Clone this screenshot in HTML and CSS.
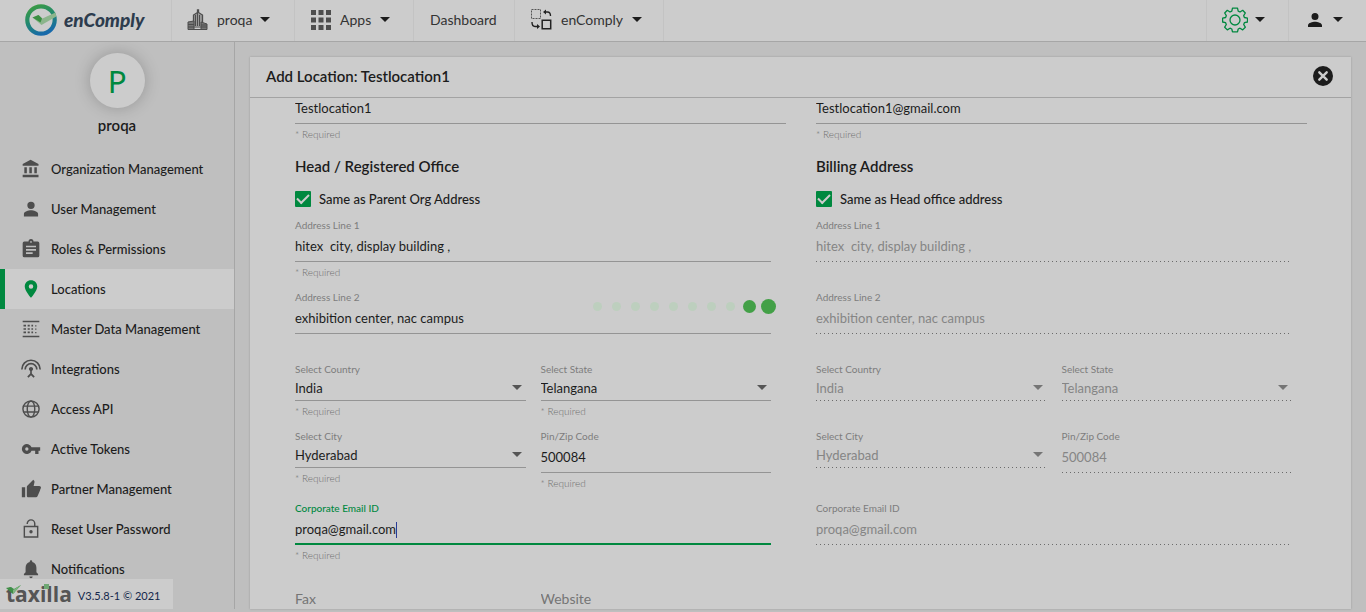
FILE: index.html
```html
<!DOCTYPE html>
<html lang="en">
<head>
<meta charset="utf-8">
<title>enComply - Add Location</title>
<link rel="stylesheet" href="styles.css">
</head>
<body>
<div class="app">
  <header class="topbar">
    <a class="brand" href="#">
      <svg width="34" height="34" viewBox="0 0 34 34" aria-hidden="true">
        <defs><linearGradient id="ring" x1="0.2" y1="0" x2="0.6" y2="1"><stop offset="0" stop-color="#3a9a45"/><stop offset="0.45" stop-color="#238a6c"/><stop offset="1" stop-color="#1769ab"/></linearGradient></defs>
        <circle cx="17" cy="17" r="13.700" fill="#ccc" stroke="url(#ring)" stroke-width="4.200"/>
        <path d="M8.500 14.500l6-2.500 4 3.500 13-6 .8 4L17.500 22z" fill="#8cb58c"/>
        <path d="M8.500 14.500l6-2.500 3.500 3.500-1.500 4z" fill="#3b8f42"/>
      </svg>
      <span class="brand-name">enComply</span>
    </a>
    <nav class="topnav">
      <button class="nav-item org" type="button">
        <svg width="22" height="22" viewBox="0 0 22 22" aria-hidden="true"><path d="M6.500 17V6l4-2.500V1h1v2.500L15.500 6v11" fill="#999" stroke="#4d4d4d" stroke-width="1.300"/><path d="M8.500 6v11M10.500 4v13M12.500 6v11" stroke="#4d4d4d" stroke-width="1"/><path d="M1 13l6-1v8.500H1zM14 13l6 2v5.500h-6z" fill="#777" stroke="#4d4d4d"/><path d="M1 15.500h6M1 18h19M14 16h6M7 20.500h7" stroke="#4d4d4d"/></svg>
        <span>proqa</span><i class="caret-down"></i>
      </button>
      <button class="nav-item apps" type="button">
        <svg width="20" height="20" viewBox="0 0 20 20" fill="#4d4d4d" aria-hidden="true"><path d="M0 0h5v5H0zM7.500 0h5v5h-5zM15 0h5v5h-5zM0 7.500h5v5H0zM7.500 7.500h5v5h-5zM15 7.500h5v5h-5zM0 15h5v5H0zM7.500 15h5v5h-5zM15 15h5v5h-5z"/></svg>
        <span>Apps</span><i class="caret-down"></i>
      </button>
      <a class="nav-item dash" href="#">Dashboard</a>
      <button class="nav-item product" type="button">
        <svg width="21" height="21" viewBox="0 0 21 21" fill="none" stroke="#222" aria-hidden="true"><path d="M.5.5h9v9h-9z" stroke="#555" stroke-dasharray="2 1"/><path d="M11.200 11.200h8.500v8.500h-8.500z" stroke-width="1.500"/><path d="M14 3h2.500q3 0 3 4M1 13q0 4.500 3 4.500h3" stroke-width="1.400"/><path d="M15 .5L12 3l3 2.500zM6 15l3 2.500L6 20z" fill="#222" stroke="none"/></svg>
        <span>enComply</span><i class="caret-down"></i>
      </button>
    </nav>
    <button class="nav-item gear" type="button" aria-label="Settings">
      <svg width="26" height="26" viewBox="0 0 26 26" fill="none" stroke="#00883f" stroke-width="1.300" stroke-linejoin="round" aria-hidden="true"><circle cx="13" cy="13" r="5"/><path d="M10.500 1.200h5l.7 3 1.800.8 2.700-1.700 2.600 2.700-1.600 2.700.7 1.800 3.100.7v3.800l-3.100.7-.7 1.800 1.600 2.700-2.600 2.700-2.700-1.700-1.800.8-.7 2.800h-5l-.7-2.800-1.800-.8-2.700 1.700L2.700 20.200l1.600-2.700-.7-1.800-3-.7v-3.800l3-.7.7-1.800L2.700 6l2.600-2.700L8 5l1.800-.8z"/></svg>
      <i class="caret-down"></i>
    </button>
    <button class="nav-item account" type="button" aria-label="Account">
      <svg width="14" height="14" viewBox="4 4 16 16" fill="#1c1c1c" aria-hidden="true"><path d="M12 12a4 4 0 1 0 0-8 4 4 0 0 0 0 8zm0 2c-2.670 0-8 1.340-8 4v2h16v-2c0-2.660-5.330-4-8-4z"/></svg>
      <i class="caret-down"></i>
    </button>
  </header>

  <div class="main">
    <aside class="sidebar">
      <div class="avatar">P</div>
      <div class="org-name">proqa</div>
      <nav class="menu">
        <a href="#"><svg viewBox="0 0 24 24"><path d="M4 10v7h3v-7H4zm6 0v7h3v-7h-3zM2 22h19v-3H2v3zm14-12v7h3v-7h-3zM11.500 1L2 6v2h19V6l-9.500-5z"/></svg>Organization Management</a>
        <a href="#"><svg viewBox="0 0 24 24"><path d="M12 12a4.400 4.400 0 1 0 0-8.800 4.400 4.400 0 0 0 0 8.800zm0 1.500c-3 0-8.500 1.500-8.500 4.500v3h17v-3c0-3-5.500-4.500-8.500-4.500z"/></svg>User Management</a>
        <a href="#"><svg viewBox="0 0 24 24"><path d="M20 3h-5a3 3 0 0 0-6 0H4a2 2 0 0 0-2 2v15a2 2 0 0 0 2 2h16a2 2 0 0 0 2-2V5a2 2 0 0 0-2-2zm-8-.5a1 1 0 1 1 0 2 1 1 0 0 1 0-2zM14 18H6v-2h8zm4-4H6v-2h12zm0-4H6V8h12z"/></svg>Roles &amp; Permissions</a>
        <a href="#" class="active" aria-current="page"><svg viewBox="0 0 24 24"><path d="M12 1.500c-4.300 0-7.500 3.200-7.500 7.500 0 5.500 7.500 13.500 7.500 13.500S19.500 14.500 19.500 9c0-4.300-3.200-7.500-7.500-7.500zm0 10.200A2.700 2.700 0 1 1 12 6.300a2.700 2.700 0 0 1 0 5.400z"/></svg>Locations</a>
        <a href="#"><svg viewBox="0 0 24 24"><path d="M2 2h20v2H2zM2 20h20v2H2zM3 7h3v2H3zM8 7h2.500v2H8zM12.500 7h2v2h-2zM17 7.500h1.500V9H17zM3 11h3v2H3zM8 11h2.500v2H8zM12.500 11h2v2h-2zM17 11.500h1.500V13H17zM3 15h3v2H3zM8 15h2.500v2H8zM12.500 15h2v2h-2zM17 15.500h1.500V17H17z"/></svg>Master Data Management</a>
        <a href="#"><svg viewBox="0 0 24 24"><path d="M1 12.500a11 11 0 0 1 22 0M5 12.500a7 7 0 0 1 14 0" fill="none" stroke="#4d4d4d" stroke-width="2"/><path d="M13 14.300a2.500 2.500 0 1 0-2 0v3.200L7.500 21l1.500 1.400 3-3 3 3 1.500-1.400-3.500-3.500z"/></svg>Integrations</a>
        <a href="#"><svg viewBox="0 0 24 24"><g fill="none" stroke="#4d4d4d" stroke-width="1.700"><circle cx="12" cy="12" r="9.700"/><ellipse cx="12" cy="12" rx="4.500" ry="9.700"/><path d="M3 8.500h18M3 15.500h18"/></g></svg>Access API</a>
        <a href="#"><svg viewBox="0 0 24 24"><path d="M12.650 10A6 6 0 1 0 12.650 14H17v4h4v-4h2v-4H12.650zM7 14a2 2 0 1 1 0-4 2 2 0 0 1 0 4z"/></svg>Active Tokens</a>
        <a href="#"><svg viewBox="0 0 24 24"><path d="M1 22h4V10H1v12zm23-11.500c0-1.100-.9-2-2-2h-6.800l1-4.900v-.3c0-.4-.2-.8-.4-1.100L14.700 1 7.600 8.100c-.4.400-.6.900-.6 1.400V20c0 1.100.9 2 2 2h9c.8 0 1.500-.5 1.800-1.200l3-7.100c.1-.2.200-.5.200-.7z"/></svg>Partner Management</a>
        <a href="#"><svg viewBox="0 0 24 24"><g fill="none" stroke="#4d4d4d" stroke-width="1.700"><path d="M4 9h16v12.500H4zM7.500 6V5.500a4.500 4.500 0 0 1 9 0V9"/></g><circle cx="12" cy="15.300" r="2"/></svg>Reset User Password</a>
        <a href="#"><svg viewBox="0 0 24 24"><path d="M12 23a2 2 0 0 0 2-2h-4a2 2 0 0 0 2 2zm6.500-7v-5.500c0-3.300-1.800-6-5-6.800V3a1.500 1.500 0 0 0-3 0v.7c-3.200.8-5 3.500-5 6.800V16l-2 2v1.500h17V18z"/></svg>Notifications</a>
      </nav>
      <footer class="version">
        <span class="taxilla">taxilla<svg width="46" height="14" viewBox="0 0 46 14" aria-hidden="true"><path d="M0 4l5-1 3 2 7-4-8 9z" fill="#3f8f48"/><path d="M7 6l8-5-8 9z" fill="#7fb582"/><path d="M38 0h5v5h-5z" fill="#6fa873"/></svg></span>
        <span class="ver">V3.5.8-1 © 2021</span>
      </footer>
    </aside>

    <main class="content">
      <section class="panel">
        <div class="panel-head">
          <h2>Add Location: Testlocation1</h2>
          <button class="close" type="button" aria-label="Close">
            <svg width="20" height="20" viewBox="0 0 20 20" aria-hidden="true"><circle cx="10" cy="10" r="10" fill="#1c1c1c"/><path d="M6.300 6.300l7.400 7.400M13.700 6.300l-7.400 7.400" stroke="#ccc" stroke-width="2.400" stroke-linecap="round"/></svg>
          </button>
        </div>
        <form class="panel-body">
          <div class="column">
            <div class="field first"><input type="text" aria-label="Location Name" value="Testlocation1"><small>* Required</small></div>
            <h3>Head / Registered Office</h3>
            <label class="check"><input type="checkbox" checked><span>Same as Parent Org Address</span></label>
            <div class="fields">
              <div class="field wide"><label for="a1">Address Line 1</label><input id="a1" type="text" value="hitex  city, display building ,"><small>* Required</small></div>
              <div class="field wide"><label for="a2">Address Line 2</label><input id="a2" type="text" value="exhibition center, nac campus"><small></small></div>
              <div class="field"><label for="co">Select Country</label><div class="select"><select id="co"><option>India</option></select></div><small>* Required</small></div>
              <div class="field"><label for="st">Select State</label><div class="select"><select id="st"><option>Telangana</option></select></div><small>* Required</small></div>
              <div class="field"><label for="ci">Select City</label><div class="select"><select id="ci"><option>Hyderabad</option></select></div><small>* Required</small></div>
              <div class="field"><label for="pin">Pin/Zip Code</label><input id="pin" type="text" value="500084"><small>* Required</small></div>
              <div class="field wide focused"><label for="em">Corporate Email ID</label><input id="em" type="text" value="proqa@gmail.com"><i class="text-caret"></i><small>* Required</small></div>
              <div class="field empty"><input type="text" aria-label="Fax" placeholder="Fax"></div>
              <div class="field empty"><input type="text" aria-label="Website" placeholder="Website"></div>
            </div>
          </div>
          <div class="column">
            <div class="field first"><input type="text" aria-label="Email" value="Testlocation1@gmail.com"><small>* Required</small></div>
            <h3>Billing Address</h3>
            <label class="check"><input type="checkbox" checked><span>Same as Head office address</span></label>
            <div class="fields">
              <div class="field wide"><label for="b1">Address Line 1</label><input id="b1" type="text" value="hitex  city, display building ," disabled><small></small></div>
              <div class="field wide"><label for="b2">Address Line 2</label><input id="b2" type="text" value="exhibition center, nac campus" disabled><small></small></div>
              <div class="field"><label for="bco">Select Country</label><div class="select"><select id="bco" disabled><option>India</option></select></div><small></small></div>
              <div class="field"><label for="bst">Select State</label><div class="select"><select id="bst" disabled><option>Telangana</option></select></div><small></small></div>
              <div class="field"><label for="bci">Select City</label><div class="select"><select id="bci" disabled><option>Hyderabad</option></select></div><small></small></div>
              <div class="field"><label for="bpin">Pin/Zip Code</label><input id="bpin" type="text" value="500084" disabled><small></small></div>
              <div class="field wide"><label for="bem">Corporate Email ID</label><input id="bem" type="text" value="proqa@gmail.com" disabled><small></small></div>
            </div>
          </div>
        </form>
      </section>
    </main>
  </div>
</div>
<div class="loader" role="status" aria-label="Loading">
  <i></i><i></i><i></i><i></i><i></i><i></i><i></i><i></i><i class="mid"></i><i class="big"></i>
</div>
</body>
</html>
```
FILE: styles.css
```css
* { box-sizing: border-box; }

body {
  margin: 0;
  background: #bfbfbf;
  color: #1c1c1c;
  font-family: Lato, "Liberation Sans", sans-serif;
  font-size: 13px;
}

button, input, select {
  font: inherit;
  color: inherit;
  background: none;
  border: 0;
  border-radius: 0;
  margin: 0;
  padding: 0;
}

a { color: inherit; text-decoration: none; }

.app {
  display: flex;
  flex-direction: column;
  height: 100vh;
  padding-bottom: 3px;
  overflow: hidden;
}

/* Top bar */
.topbar {
  display: flex;
  flex: none;
  height: 42px;
  background: #ccc;
  border-bottom: 1px solid #a6a6a6;
}
.brand {
  display: flex;
  align-items: center;
  gap: 6px;
  width: 171px;
  padding: 0 0 2px 24px;
}
.brand-name {
  font-size: 19px;
  font-weight: 900;
  font-style: italic;
  color: #2d3c4e;
}
.topnav { display: flex; flex: 1; }
.nav-item {
  display: flex;
  align-items: center;
  padding-bottom: 2px;
  border-left: 1px solid #c3c3c3;
  color: #333;
  font-size: 14px;
}
.caret-down {
  border: 5px solid transparent;
  border-top-color: #1c1c1c;
  border-bottom: 0;
}
.org { width: 123px; padding-left: 15px; gap: 8px; }
.apps { width: 119px; padding-left: 16px; gap: 9px; }
.dash { width: 101px; padding-left: 16px; }
.product { width: 150px; padding-left: 16px; gap: 9px; border-right: 1px solid #c3c3c3; }
.gear { width: 82px; padding-left: 15px; gap: 7px; }
.account { width: 78px; padding-left: 19px; gap: 11px; }

.main { display: flex; flex: 1; min-height: 0; }

/* Sidebar */
.sidebar {
  position: relative;
  flex: none;
  width: 235px;
  padding-top: 11px;
  border-right: 1px solid #a6a6a6;
  overflow: hidden;
}
.avatar {
  display: flex;
  align-items: center;
  justify-content: center;
  width: 55px;
  height: 55px;
  margin: 0 auto;
  border-radius: 50%;
  background: #ccc;
  box-shadow: 0 0 16px rgba(0, 0, 0, 0.22);
  color: #00883f;
  font-size: 30px;
}
.org-name {
  margin-top: 7px;
  font-size: 15px;
  font-weight: 600;
  line-height: 20px;
  text-align: center;
}
.menu { margin-top: 14px; }
.menu a {
  display: flex;
  align-items: center;
  gap: 10px;
  height: 40px;
  padding-left: 16px;
  border-left: 5px solid transparent;
  font-weight: 500;
}
.menu svg { width: 20px; height: 20px; fill: #4d4d4d; }
.menu .active { background: #ccc; border-left-color: #00883f; }
.menu .active svg { fill: #00883f; }

.version {
  position: absolute;
  left: 0;
  bottom: 0;
  display: flex;
  align-items: center;
  gap: 6px;
  height: 30px;
  padding: 0 13px 0 6px;
  background: #ccc;
}
.taxilla {
  position: relative;
  color: #555;
  font-family: "Open Sans", "Noto Sans", sans-serif;
  font-size: 21px;
  font-weight: 700;
  line-height: 26px;
}
.taxilla svg { position: absolute; left: 0; top: 3px; }
.ver { padding-top: 2px; color: #14284b; font-size: 11px; }

/* Panel */
.content { display: flex; flex: 1; min-width: 0; padding: 15px 15px 0; }
.panel {
  display: flex;
  flex: 1;
  flex-direction: column;
  min-width: 0;
  background: #ccc;
  box-shadow: 0 0 2px rgba(0, 0, 0, 0.2);
}
.panel-head {
  display: flex;
  flex: none;
  align-items: center;
  justify-content: space-between;
  height: 41px;
  padding: 0 18px 2px 16px;
  border-bottom: 1px solid #a3a3a3;
}
h2, h3 { margin: 0; font-size: 15px; font-weight: 600; line-height: 20px; }
.close svg { display: block; }
.panel-body {
  display: grid;
  grid-template-columns: 1fr 1fr;
  gap: 30px;
  flex: 1;
  min-height: 0;
  padding: 0 44px 0 45px;
  overflow: hidden;
}
.column { min-width: 0; }
.first { margin-top: -3px; }
.column h3 { margin-top: 14px; }
.check {
  display: flex;
  align-items: center;
  gap: 8px;
  height: 20px;
  margin-top: 13px;
  font-weight: 500;
}
.check input {
  display: grid;
  place-items: center;
  width: 16px;
  height: 16px;
  appearance: none;
  border-radius: 1px;
  background: #00883f;
}
.check input::after {
  content: "";
  width: 10px;
  height: 5px;
  margin-bottom: 3px;
  border: solid #ccc;
  border-width: 0 0 2px 2px;
  transform: rotate(-45deg);
}
.fields {
  display: grid;
  grid-template-columns: 1fr 1fr;
  gap: 9px 15px;
  margin-top: 8px;
  padding-right: 15px;
}
.wide { grid-column: span 2; }
.field {
  position: relative;
  display: flex;
  flex-direction: column;
  min-width: 0;
}
.field label { color: #7d7d7d; font-size: 10px; line-height: 16px; }
.field input, .field select {
  width: 100%;
  height: 29px;
  padding-bottom: 2px;
  border-bottom: 1px solid #949494;
  outline: 0;
}
.field small {
  height: 16px;
  margin-top: 2px;
  color: #707070;
  font-size: 10px;
  font-weight: 300;
  line-height: 16px;
}
.field select { display: block; height: 24px; appearance: none; opacity: 1; }
.select { position: relative; }
.select::after {
  content: "";
  position: absolute;
  top: 8px;
  right: 4px;
  border: 5px solid transparent;
  border-top-color: #555;
  border-bottom: 0;
}
.select:has(:disabled)::after { border-top-color: #757575; }
.field :disabled {
  color: #858585;
  border-bottom: 0;
  padding-bottom: 3px;
  background: linear-gradient(to right, #6b6b6b 1px, transparent 1px) 0 100% / 4px 1px repeat-x;
}
.focused label { color: #00883f; font-weight: 500; }
.focused input { border-bottom: 2px solid #00883f; }
.text-caret {
  position: absolute;
  left: 101px;
  top: 22px;
  width: 1px;
  height: 16px;
  background: #2a3c96;
}
.empty { padding-top: 13px; }
.empty input { font-size: 14px; }
.empty input::placeholder { color: #757575; opacity: 1; }

/* Loading indicator */
.loader {
  position: fixed;
  inset: 0;
  display: flex;
  align-items: center;
  justify-content: center;
  gap: 10px;
}
.loader i { width: 9px; height: 9px; border-radius: 50%; background: #bdcfbe; }
.loader .mid { width: 13px; height: 13px; margin: 0 -2px; background: #43a047; }
.loader .big { width: 15px; height: 15px; margin: 0 -3px; background: #43a047; }
```
